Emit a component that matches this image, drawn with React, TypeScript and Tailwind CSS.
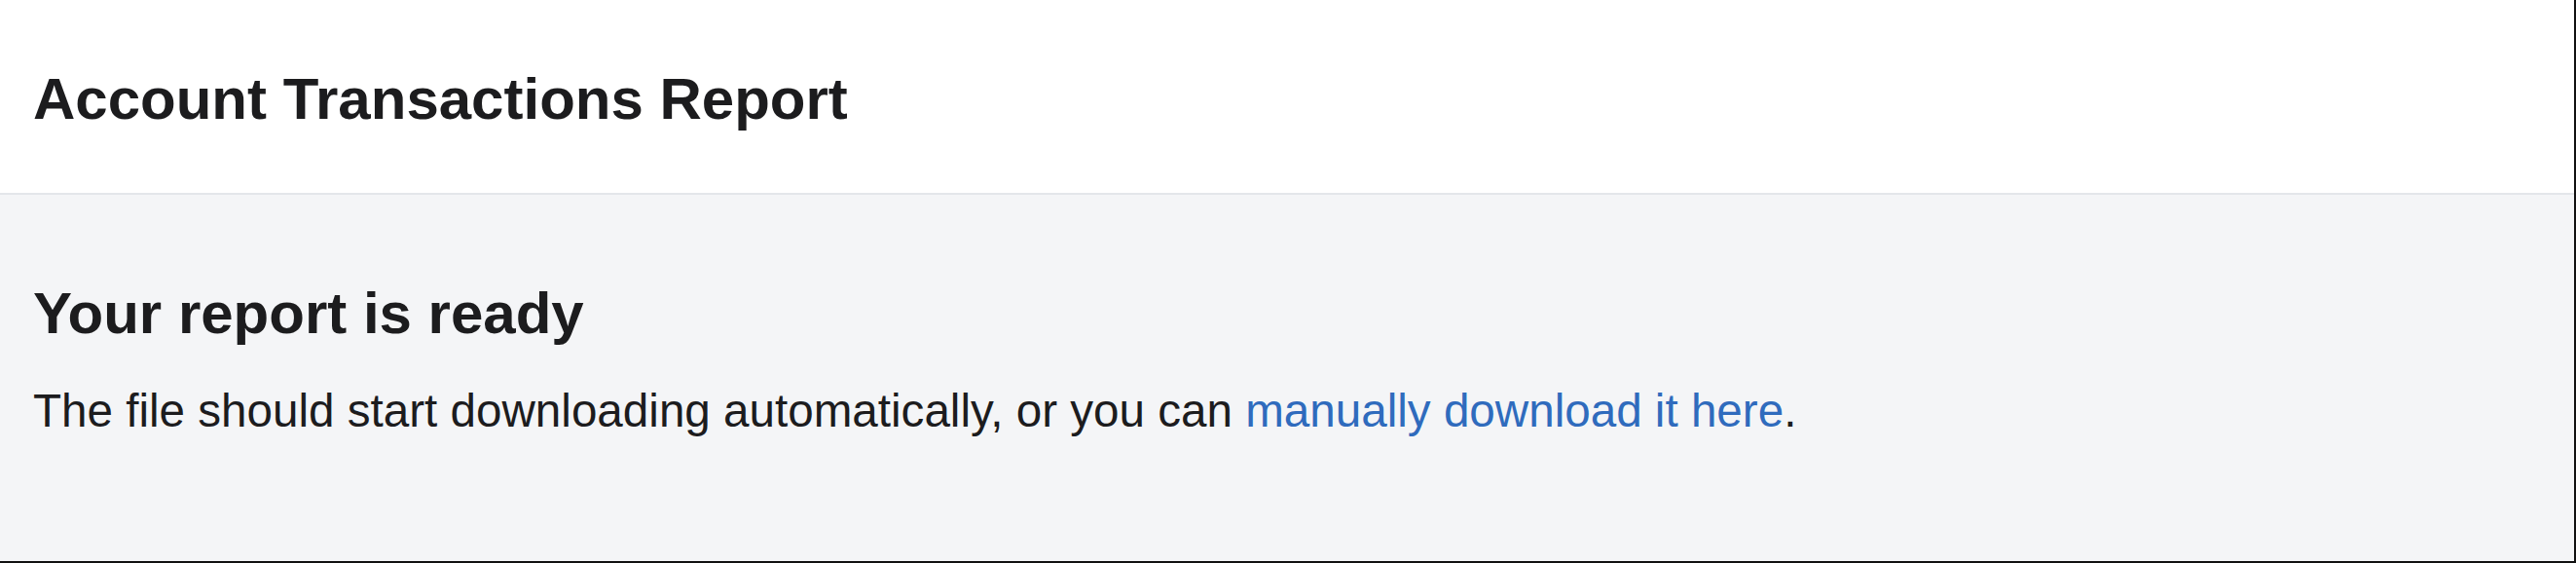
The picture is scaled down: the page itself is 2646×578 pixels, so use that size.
const App = () => {
  return (
    <div className="h-[578px] w-full flex flex-col bg-[#f4f5f7] border-r-2 border-b-2 border-[#111111] font-['Liberation_Sans',Arial,sans-serif] text-[#1c1c1e]">
      {/* Page header */}
      <div className="h-[200px] shrink-0 bg-white border-b-2 border-[#e4e6ea] pl-[34px] pt-[72px]">
        <h1 className="text-[60px] leading-none font-bold">Account Transactions Report</h1>
      </div>

      {/* Report status */}
      <div className="flex-1 pl-[34px] pt-[92px]">
        <h2 className="text-[60px] leading-none font-bold">Your report is ready</h2>
        <p className="mt-[46px] text-[47.6px] leading-none">
          The file should start downloading automatically, or you can{" "}
          <a href="#" className="text-[#2f6bbd]">
            manually download it here
          </a>
          .
        </p>
      </div>
    </div>
  );
};

export default App;
